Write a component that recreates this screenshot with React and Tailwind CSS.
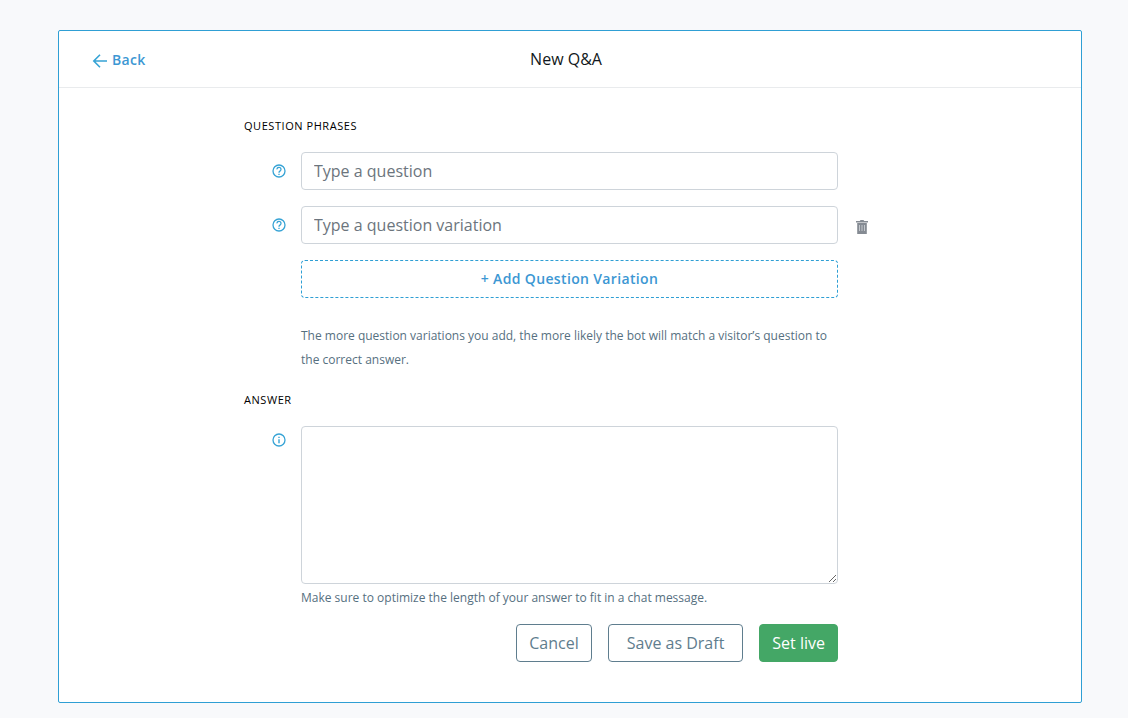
import { useState } from "react";

const fieldClass =
  "block w-full rounded border border-[#ced4da] bg-white px-3 text-base text-gray-700 placeholder:text-[#6c757d] focus:border-[#2f9fd4] focus:outline-none";

function BackArrow() {
  return (
    <svg className="h-4 w-4" viewBox="0 0 16 16" fill="none" stroke="#36a3d5" strokeWidth="1.6">
      <path d="M15 9H2M8 2.8 1.8 9 8 15.2" />
    </svg>
  );
}

function HelpIcon() {
  return (
    <svg className="h-3.5 w-3.5" viewBox="0 0 14 14" fill="none" stroke="#36a3d5">
      <circle cx="7" cy="7" r="6" strokeWidth="1.3" />
      <path d="M5 5.4a2 2 0 1 1 3.2 1.5C7.4 7.4 7 7.8 7 8.8" strokeWidth="1.3" />
      <path d="M7 9.7v1.3" strokeWidth="1.3" />
    </svg>
  );
}

function InfoIcon() {
  return (
    <svg className="h-3.5 w-3.5" viewBox="0 0 14 14" fill="none" stroke="#36a3d5">
      <circle cx="7" cy="7" r="6" strokeWidth="1.3" />
      <path d="M7 6.3v4M7 3.7V5" strokeWidth="1.4" />
    </svg>
  );
}

function TrashIcon() {
  return (
    <svg className="h-3.5 w-3" viewBox="0 0 12 14">
      <path fill="#858b93" d="M4.5 0h3l.7 1H12v1.4H0V1h3.8z" />
      <path fill="#858b93" d="M1.2 3h9.6v11H1.2z" />
      <path stroke="#c3c7cc" d="M3.5 5v6M6 5v6M8.5 5v6" />
    </svg>
  );
}

function SectionTitle({ children }) {
  return (
    <h2 className="text-[11px] leading-4 tracking-wider text-black uppercase">{children}</h2>
  );
}

function Row({ icon, children, action, iconClass = "pt-3" }) {
  return (
    <div className="flex items-start">
      <div className={`flex w-[57px] shrink-0 justify-end pr-[15px] ${iconClass}`}>{icon}</div>
      <div className="min-w-0 flex-1">{children}</div>
      <div className="w-[58px] shrink-0 pl-[18px] pt-3.5">{action}</div>
    </div>
  );
}

function App() {
  const [question, setQuestion] = useState("");
  const [variations, setVariations] = useState([""]);
  const [answer, setAnswer] = useState("");

  const updateVariation = (index, value) => {
    setVariations(variations.map((item, i) => (i === index ? value : item)));
  };

  const removeVariation = (index) => {
    setVariations(variations.filter((_, i) => i !== index));
  };

  return (
    <div className="min-h-screen bg-[#f8f9fb] pt-[30px] pr-[46px] pb-[15px] pl-[58px] font-['Open_Sans',sans-serif]">
      <main className="rounded-xs border border-[#2f9fd4] bg-white">
        {/* Header */}
        <header className="flex h-[57px] items-center justify-between border-b border-[#e9ebed] px-[33px]">
          <a
            href="#back"
            className="flex w-16 items-center gap-1 pt-0.5 text-sm font-semibold tracking-wide text-[#3c97d3]"
          >
            <BackArrow />
            Back
          </a>
          <h1 className="text-base text-[#111820]">New Q&amp;A</h1>
          <div className="w-[72px]" />
        </header>

        <form
          className="mx-auto max-w-[652px] pt-[30px] pb-10"
          onSubmit={(e) => e.preventDefault()}
        >
          {/* Questions */}
          <SectionTitle>Question phrases</SectionTitle>
          <div className="mt-[18px] flex flex-col gap-4">
            <Row icon={<HelpIcon />}>
              <input
                type="text"
                aria-label="Question"
                placeholder="Type a question"
                value={question}
                onChange={(e) => setQuestion(e.target.value)}
                className={`${fieldClass} h-[38px]`}
              />
            </Row>
            {variations.map((variation, index) => (
              <Row
                key={index}
                icon={<HelpIcon />}
                action={
                  <button
                    type="button"
                    aria-label="Remove variation"
                    onClick={() => removeVariation(index)}
                    className="block cursor-pointer"
                  >
                    <TrashIcon />
                  </button>
                }
              >
                <input
                  type="text"
                  aria-label="Question variation"
                  placeholder="Type a question variation"
                  value={variation}
                  onChange={(e) => updateVariation(index, e.target.value)}
                  className={`${fieldClass} h-[38px]`}
                />
              </Row>
            ))}
            <Row>
              <button
                type="button"
                onClick={() => setVariations([...variations, ""])}
                className="h-[38px] w-full cursor-pointer rounded border border-dashed border-[#2f9fd4] text-sm font-semibold tracking-wide text-[#3c97d3]"
              >
                + Add Question Variation
              </button>
              <p className="mt-[26px] text-xs leading-6 text-[#56707f]">
                The more question variations you add, the more likely the bot will match a
                visitor’s question to the correct answer.
              </p>
            </Row>
          </div>

          {/* Answer */}
          <div className="mt-5 mb-[18px]">
            <SectionTitle>Answer</SectionTitle>
          </div>
          <Row icon={<InfoIcon />} iconClass="pt-[7px]">
            <textarea
              aria-label="Answer"
              value={answer}
              onChange={(e) => setAnswer(e.target.value)}
              className={`${fieldClass} h-[158px] resize-y py-1.5`}
            />
            <p className="mt-1 text-xs leading-5 text-[#56707f]">
              Make sure to optimize the length of your answer to fit in a chat message.
            </p>
            <div className="mt-4 flex justify-end gap-4">
              <button
                type="button"
                className="h-[38px] cursor-pointer rounded border border-[#5f7d8e] px-3 text-base text-[#5f7d8e]"
              >
                Cancel
              </button>
              <button
                type="button"
                className="h-[38px] cursor-pointer rounded border border-[#5f7d8e] px-[18px] text-base text-[#5f7d8e]"
              >
                Save as Draft
              </button>
              <button
                type="submit"
                className="h-[38px] cursor-pointer rounded border border-[#44a766] bg-[#44a766] px-3 text-base text-white"
              >
                Set live
              </button>
            </div>
          </Row>
        </form>
      </main>
    </div>
  );
}

export default App;
